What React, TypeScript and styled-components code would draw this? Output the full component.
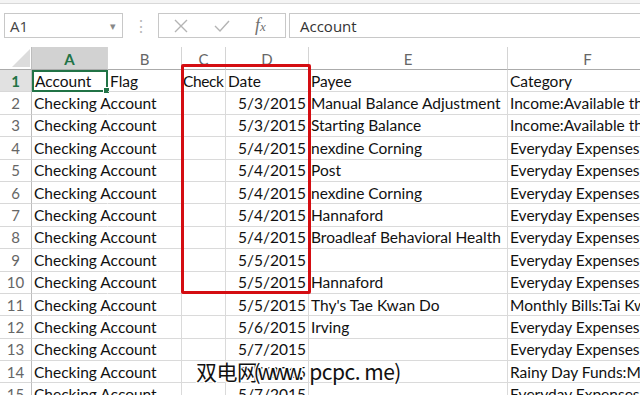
import React from 'react'
import styled, { createGlobalStyle, css } from 'styled-components'

// Data
const COLUMNS = [
  { key: 'A', width: 76 },
  { key: 'B', width: 74 },
  { key: 'C', width: 44, narrow: true },
  { key: 'D', width: 83 },
  { key: 'E', width: 199 },
  { key: 'F', width: 160 },
]

const ROWS = [
  ['Account', 'Flag', 'Check', 'Date', 'Payee', 'Category'],
  ['Checking Account', '', '', '5/3/2015', 'Manual Balance Adjustment', 'Income:Available this month'],
  ['Checking Account', '', '', '5/3/2015', 'Starting Balance', 'Income:Available this month'],
  ['Checking Account', '', '', '5/4/2015', 'nexdine Corning', 'Everyday Expenses:Groceries'],
  ['Checking Account', '', '', '5/4/2015', 'Post', 'Everyday Expenses:Groceries'],
  ['Checking Account', '', '', '5/4/2015', 'nexdine Corning', 'Everyday Expenses:Groceries'],
  ['Checking Account', '', '', '5/4/2015', 'Hannaford', 'Everyday Expenses:Groceries'],
  ['Checking Account', '', '', '5/4/2015', 'Broadleaf Behavioral Health', 'Everyday Expenses:Medical'],
  ['Checking Account', '', '', '5/5/2015', '', 'Everyday Expenses:Fuel'],
  ['Checking Account', '', '', '5/5/2015', 'Hannaford', 'Everyday Expenses:Groceries'],
  ['Checking Account', '', '', '5/5/2015', "Thy's Tae Kwan Do", 'Monthly Bills:Tai Kwan Do'],
  ['Checking Account', '', '', '5/6/2015', 'Irving', 'Everyday Expenses:Fuel'],
  ['Checking Account', '', '', '5/7/2015', '', 'Everyday Expenses:Fuel'],
  ['Checking Account', '', '', '5/7/2015', '', 'Rainy Day Funds:Medical'],
  ['Checking Account', '', '', '5/7/2015', '', 'Everyday Expenses:Groceries'],
]

const GRID_TEMPLATE = `32px ${COLUMNS.map(c => `${c.width}px`).join(' ')}`

const App = () => (
  <>
    <GlobalStyle />
    <Window>
      <TitleStrip />
      <FormulaBar>
        <NameBox>
          <span>A1</span>
          <DropArrow>▾</DropArrow>
        </NameBox>
        <Dots>⋮</Dots>
        <FormulaButtons>
          <FormulaIcon>
            <svg width="16" height="16" viewBox="0 0 16 16">
              <path d="M2 2 L14 14 M14 2 L2 14" stroke="#b4b4b4" strokeWidth="1.4" fill="none" />
            </svg>
          </FormulaIcon>
          <FormulaIcon>
            <svg width="18" height="16" viewBox="0 0 18 16">
              <path d="M2 8 L7 13 L16 3" stroke="#b4b4b4" strokeWidth="1.4" fill="none" />
            </svg>
          </FormulaIcon>
          <FxLabel>
            f<sub>x</sub>
          </FxLabel>
        </FormulaButtons>
        <FormulaInput>Account</FormulaInput>
      </FormulaBar>

      <Sheet>
        <Grid>
          <Corner>
            <svg width="18" height="18" viewBox="0 0 18 18">
              <path d="M18 0 L18 18 L0 18 Z" fill="#dcdcdc" />
            </svg>
          </Corner>
          {COLUMNS.map(col => (
            <ColumnHeader key={col.key} selected={col.key === 'A'}>
              {col.key}
            </ColumnHeader>
          ))}

          {ROWS.map((row, r) => (
            <React.Fragment key={r}>
              <RowHeader selected={r === 0}>{r + 1}</RowHeader>
              {row.map((value, c) => {
                const isDate = r > 0 && c === 3
                // text runs on into the next column when that one is empty
                const spill = !isDate && value !== '' && c < row.length - 1 && row[c + 1] === ''
                return (
                  <Cell
                    key={c}
                    alignRight={isDate}
                    spill={spill}
                    narrow={COLUMNS[c].narrow}
                    active={r === 0 && c === 0}
                  >
                    {value}
                    {r === 0 && c === 0 && <FillHandle />}
                  </Cell>
                )
              })}
            </React.Fragment>
          ))}
        </Grid>

        <Highlight />
        <Watermark>
          双电网<Squeezed>(www.</Squeezed> pcpc. me)
        </Watermark>
      </Sheet>
    </Window>
  </>
)

export default App

const GlobalStyle = createGlobalStyle`
  html, body {
    margin: 0;
    padding: 0;
    background: #ffffff;
    overflow: hidden;
  }
`

const Window = styled.div`
  width: 640px;
  height: 395px;
  overflow: hidden;
  background: #ffffff;
  font-family: Lato, 'Noto Sans', sans-serif;
`

const TitleStrip = styled.div`
  height: 3px;
  background: #f4f4f4;
  border-bottom: 1px solid #d8d8d8;
`

const FormulaBar = styled.div`
  display: flex;
  align-items: center;
  height: 25px;
  margin: 9px 0 0 4px;
`

const boxBorder = css`
  box-sizing: border-box;
  height: 25px;
  border: 1px solid #c8c8c8;
  background: #ffffff;
`

const NameBox = styled.div`
  ${boxBorder}
  width: 119px;
  display: flex;
  align-items: center;
  justify-content: space-between;
  padding: 0 6px 0 5px;
  font-family: 'Open Sans', sans-serif;
  font-size: 15px;
  color: #444444;
`

const DropArrow = styled.span`
  font-size: 11px;
  color: #888888;
`

const Dots = styled.div`
  width: 35px;
  text-align: center;
  color: #b8b8b8;
  font-size: 16px;
`

const FormulaButtons = styled.div`
  ${boxBorder}
  width: 128px;
  display: flex;
  align-items: center;
  gap: 24px;
  padding-left: 14px;
`

const FormulaIcon = styled.span`
  display: flex;
  align-items: center;
`

const FxLabel = styled.span`
  font-family: 'Liberation Serif', serif;
  font-style: italic;
  font-size: 18px;
  color: #707070;

  sub {
    font-size: 13px;
    vertical-align: baseline;
  }
`

const FormulaInput = styled.div`
  ${boxBorder}
  flex: 1;
  margin-left: 3px;
  border-right: none;
  display: flex;
  align-items: center;
  padding-left: 10px;
  font-family: 'Open Sans', sans-serif;
  font-size: 15px;
  color: #333333;
`

const Sheet = styled.div`
  position: relative;
  margin-top: 9px;
`

const Grid = styled.div`
  display: grid;
  grid-template-columns: ${GRID_TEMPLATE};
  grid-template-rows: 23px;
  grid-auto-rows: 22.4px;
  font-size: 15.5px;
  color: #111111;
`

const Corner = styled.div`
  box-sizing: border-box;
  display: flex;
  align-items: flex-end;
  justify-content: flex-end;
  padding: 0 1px 2px 0;
  border-right: 1px solid #bdbdbd;
  border-bottom: 1px solid #ababab;
`

const ColumnHeader = styled.div<{ selected?: boolean }>`
  box-sizing: border-box;
  display: flex;
  align-items: center;
  justify-content: center;
  padding-top: 1px;
  border-right: 1px solid #d4d4d4;
  border-bottom: 1px solid #ababab;
  font-size: 15px;
  color: ${p => (p.selected ? '#217346' : '#666666')};
  font-weight: ${p => (p.selected ? 700 : 400)};
  background: ${p => (p.selected ? '#d2d2d2' : '#ffffff')};
`

const RowHeader = styled.div<{ selected?: boolean }>`
  box-sizing: border-box;
  display: flex;
  align-items: center;
  justify-content: center;
  border-right: 1px solid #bdbdbd;
  border-bottom: 1px solid #d8d8d8;
  font-size: 15px;
  color: ${p => (p.selected ? '#217346' : '#666666')};
  font-weight: ${p => (p.selected ? 700 : 400)};
  background: ${p => (p.selected ? '#e1e1e1' : '#ffffff')};
`

const Cell = styled.div<{ alignRight?: boolean; active?: boolean; spill?: boolean; narrow?: boolean }>`
  position: relative;
  box-sizing: border-box;
  display: flex;
  align-items: center;
  justify-content: ${p => (p.alignRight ? 'flex-end' : 'flex-start')};
  padding: 0 2px 0 ${p => (p.narrow ? '1px' : '2px')};
  letter-spacing: ${p => (p.narrow ? '-0.4px' : 'normal')};
  border-right: 1px solid #dadada;
  border-bottom: 1px solid #dadada;
  white-space: nowrap;
  overflow: hidden;

  ${p =>
    p.spill &&
    css`
      overflow: visible;
      border-right-color: transparent;
      z-index: 1;
    `}

  ${p =>
    p.active &&
    css`
      overflow: visible;
      padding-left: 3px;
      outline: 2px solid #217346;
      outline-offset: -2px;
    `}
`

const FillHandle = styled.span`
  position: absolute;
  right: -3px;
  bottom: -3px;
  width: 5px;
  height: 5px;
  background: #217346;
  border: 1px solid #ffffff;
`

const Highlight = styled.div`
  position: absolute;
  left: 181px;
  top: 17px;
  width: 130px;
  height: 230px;
  box-sizing: border-box;
  border: 3px solid #d40d12;
  border-radius: 2px;
  pointer-events: none;
  z-index: 2;
`

const Watermark = styled.div`
  position: absolute;
  left: 196px;
  top: 309px;
  font-family: 'Noto Sans CJK SC', 'Noto Sans', sans-serif;
  font-size: 21px;
  letter-spacing: -0.5px;
  color: #111111;
  text-shadow:
    -1px -1px 0 #fff, 1px -1px 0 #fff, -1px 1px 0 #fff, 1px 1px 0 #fff,
    0 -1px 0 #fff, 0 1px 0 #fff, -1px 0 0 #fff, 1px 0 0 #fff;
  pointer-events: none;
  z-index: 3;
`

const Squeezed = styled.span`
  letter-spacing: -3px;
  margin-left: -4px;
  margin-right: 4px;
`
